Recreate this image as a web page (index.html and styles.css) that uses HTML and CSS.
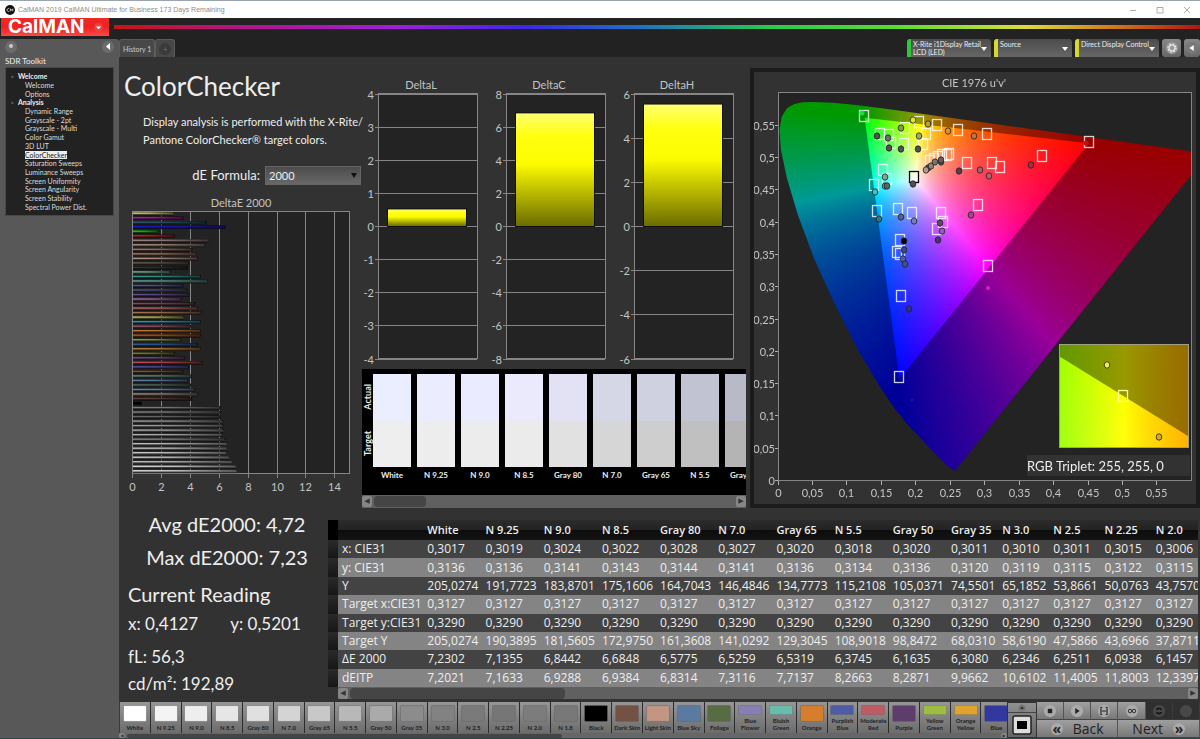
FILE: index.html
```html
<!DOCTYPE html>
<html lang="en">
  <head>
    <title>CalMAN 2019</title>
    <meta charset="UTF-8" />
    <meta name="viewport" content="width=device-width, initial-scale=1" />
    <link rel="stylesheet" href="styles.css">
  </head>
  <body>
    <header class="titlebar">
      <svg class="app-icon" viewBox="0 0 10 10"><circle cx="5" cy="5" r="5" fill="#111"/><path d="M4.4 3.8A1.5 1.5 0 1 0 4.4 6.2M5.4 6.3V3.8L6.6 5.4 7.8 3.8V6.3" fill="none" stroke="#ddd" stroke-width="0.8"/></svg>
      <span class="app-title">CalMAN 2019 CalMAN Ultimate for Business 173 Days Remaining</span>
      <button class="win" aria-label="Minimize"><svg viewBox="0 0 8 8"><path d="M1 4.5H7"/></svg></button>
      <button class="win" aria-label="Maximize"><svg viewBox="0 0 8 8"><path d="M1 1.5H7V7H1Z"/></svg></button>
      <button class="win" aria-label="Close"><svg viewBox="0 0 8 8"><path d="M1 1L7 7M7 1L1 7"/></svg></button>
    </header>

    <div class="brandbar">
      <button class="logo">CalMAN <svg viewBox="0 0 10 10"><circle cx="5" cy="5" r="5" fill="#e8443f"/><path d="M2 4H8L5 7Z" fill="#fff"/></svg></button>
      <div class="rainbow"></div>
    </div>

    <div class="shell">
      <aside class="sidebar">
        <div class="side-buttons">
          <button class="knob" aria-label="Pin"><svg viewBox="0 0 12 12"><circle cx="6" cy="5" r="2" fill="#ccc"/></svg></button>
          <button class="knob" aria-label="Collapse"><svg viewBox="0 0 12 12"><path d="M8 2V9L4 5.5Z" fill="#fff"/></svg></button>
        </div>
        <h2>SDR Toolkit</h2>
        <ul class="tree">
          <li class="group">Welcome</li>
          <li><a href="#">Welcome</a></li>
          <li><a href="#">Options</a></li>
          <li class="group">Analysis</li>
          <li><a href="#">Dynamic Range</a></li>
          <li><a href="#">Grayscale - 2pt</a></li>
          <li><a href="#">Grayscale - Multi</a></li>
          <li><a href="#">Color Gamut</a></li>
          <li><a href="#">3D LUT</a></li>
          <li><a href="#" class="active">ColorChecker</a></li>
          <li><a href="#">Saturation Sweeps</a></li>
          <li><a href="#">Luminance Sweeps</a></li>
          <li><a href="#">Screen Uniformity</a></li>
          <li><a href="#">Screen Angularity</a></li>
          <li><a href="#">Screen Stability</a></li>
          <li><a href="#">Spectral Power Dist.</a></li>
        </ul>
      </aside>

      <div class="work">
        <div class="tabs">
          <button class="tab">History 1</button>
          <button class="tab add" aria-label="Add tab"><span>+</span></button>
          <div class="devices">
            <button class="device green"><span>X-Rite i1Display Retail<br>LCD (LED)</span><i></i></button>
            <button class="device short"><span>Source</span><i></i></button>
            <button class="device"><span>Direct Display Control</span><i></i></button>
            <button class="gear" aria-label="Settings"><svg viewBox="0 0 16 16"><circle cx="8" cy="8" r="7" fill="#999"/><circle cx="8" cy="8" r="3.4" fill="none" stroke="#eee" stroke-width="1.2"/><circle cx="8" cy="8" r="4.6" fill="none" stroke="#eee" stroke-width="1.4" stroke-dasharray="1.8 1.8"/></svg></button>
            <button class="gear last" aria-label="Expand"><svg viewBox="0 0 16 16"><circle cx="8" cy="8" r="7" fill="#777"/><path d="M10 4.5V11.500L5 8Z" fill="#fff"/></svg></button>
          </div>
        </div>

        <main>
          <div class="top">
            <section class="intro">
              <h1>ColorChecker</h1>
              <p>Display analysis is performed with the X-Rite/<br>Pantone ColorChecker® target colors.</p>
              <div class="formula">
                <label for="formula">dE Formula:</label>
                <span class="select"><select id="formula"><option>2000</option></select></span>
              </div>
              <svg id="deltaE" class="chart" viewBox="0 0 243 301"></svg>
            </section>

            <section class="middle">
              <div class="deltas">
                <svg id="deltaL" class="chart" viewBox="0 0 128 294"></svg>
                <svg id="deltaC" class="chart" viewBox="0 0 128 294"></svg>
                <svg id="deltaH" class="chart" viewBox="0 0 128 294"></svg>
              </div>
              <div class="patches">
                <div class="side"><span>Actual</span><span>Target</span></div>
                <div class="patch-list" id="patches"></div>
              </div>
              <div class="scroll"><button aria-label="Left">◀</button><span class="thumb"></span><button aria-label="Right">▶</button></div>
            </section>

            <section class="cie">
              <canvas id="gamut" width="442" height="432"></canvas>
              <svg id="cie" class="chart" viewBox="0 0 442 432"></svg>
            </section>
          </div>

          <div class="bottom">
            <section class="readings">
              <p class="big">Avg dE2000: 4,72</p>
              <p class="big">Max dE2000: 7,23</p>
              <h2>Current Reading</h2>
              <p class="xy"><span>x: 0,4127</span><span>y: 0,5201</span></p>
              <p class="fl">fL: 56,3</p>
              <p>cd/m²: 192,89</p>
            </section>
            <section class="data">
              <table>
                <colgroup><col class="c-stub"><col class="c-name"><col class="c-wide" span="9"><col class="c-narrow" span="5"></colgroup>
                <thead><tr id="head"></tr></thead>
                <tbody id="rows"></tbody>
              </table>
              <div class="scroll flat"><button aria-label="Left">◀</button><span class="thumb"></span><button aria-label="Right">▶</button></div>
            </section>
          </div>
        </main>

        <footer>
          <div class="swatches">
            <div class="swatch-list" id="swatches"></div>
            <div class="scroll mini"><button aria-label="Left">◀</button><span class="thumb"></span><button aria-label="Right">▶</button></div>
          </div>
          <div class="window-pick">
            <button class="up" aria-label="Pattern menu"><svg viewBox="0 0 10 10"><circle cx="5" cy="5" r="4.500" fill="#777"/><path d="M2.500 6H7.500L5 3Z" fill="#222"/></svg></button>
            <button class="pattern" aria-label="Pattern window"><svg viewBox="0 0 20 20"><rect x="1" y="1" width="18" height="18" rx="2" fill="#ddd" stroke="#222" stroke-width="1.500"/><rect x="5" y="6" width="10" height="8" fill="#000"/></svg></button>
          </div>
          <div class="controls">
            <button aria-label="Stop"><svg viewBox="0 0 16 16"><circle cx="8" cy="8" r="7" fill="#ababab"/><path d="M5.500 5.500H10.500V10.500H5.500Z" fill="#222"/></svg></button>
            <button aria-label="Play"><svg viewBox="0 0 16 16"><circle cx="8" cy="8" r="7" fill="#ababab"/><path d="M6 4.500L11 8L6 11.500Z" fill="#222"/></svg></button>
            <button aria-label="Read series"><svg viewBox="0 0 16 16"><circle cx="8" cy="8" r="7" fill="#ababab"/><path d="M6 4H4.500V12H6M10 4H11.500V12H10M5.500 8H10.500" fill="none" stroke="#222" stroke-width="1.200"/></svg></button>
            <button aria-label="Read continuous"><svg viewBox="0 0 16 16"><circle cx="8" cy="8" r="7" fill="#ababab"/><circle cx="5.700" cy="8" r="2" fill="none" stroke="#222"/><circle cx="10.300" cy="8" r="2" fill="none" stroke="#222"/></svg></button>
            <button class="off" aria-label="Auto"><svg viewBox="0 0 16 16"><circle cx="8" cy="8" r="7" fill="#484848"/><path d="M5 6.500Q8 3.500 11 6.500M5 9.500Q8 12.500 11 9.500" fill="none" stroke="#111" stroke-width="1.800"/></svg></button>
            <button class="off" aria-label="Record"><svg viewBox="0 0 16 16"><circle cx="8" cy="8" r="7" fill="#484848"/></svg></button>
            <button class="nav"><b>«</b>Back</button>
            <button class="nav">Next<b>»</b></button>
          </div>
        </footer>
      </div>
    </div>

    <script src="script.js"></script>
  </body>
</html>
```
FILE: styles.css
```css
* {
  box-sizing: border-box;
}
body {
  margin: 0;
  min-height: 100vh;
  display: flex;
  flex-direction: column;
  background-color: #222;
  color: #eee;
  font-family: Lato, sans-serif;
  font-size: 15px;
  border-bottom: 1px solid #2b4650;
}
h1,
h2,
p,
ul {
  margin: 0;
  padding: 0;
  font-weight: normal;
}
button {
  border: 0;
  padding: 0;
  font-family: inherit;
  color: inherit;
  background: none;
  cursor: pointer;
}

/* title bar */
.titlebar {
  height: 18px;
  display: flex;
  align-items: center;
  background-color: #fff;
  border-top: 1px solid #9aa3b0;
  padding-left: 5px;
}
.app-icon {
  width: 10px;
  height: 10px;
}
.app-title {
  flex: 1;
  margin-left: 3px;
  color: #8c8c8c;
  font-family: "Liberation Sans", sans-serif;
  font-size: 7px;
}
.win {
  width: 27px;
  height: 14px;
}
.win svg {
  width: 8px;
  height: 8px;
  display: block;
  margin: auto;
  fill: none;
  stroke: #999;
  stroke-width: 0.8;
}

.brandbar {
  height: 21px;
  display: flex;
  align-items: flex-start;
  gap: 5px;
  padding-left: 1px;
}
.logo {
  width: 108px;
  height: 18px;
  display: flex;
  align-items: center;
  justify-content: space-between;
  padding: 0 6px 0 7px;
  background: linear-gradient(#ee2a28, #f02020 50%, #fa4a44);
  color: #fff;
  font-family: Inter, sans-serif;
  font-size: 19px;
  font-weight: 700;
  line-height: 18px;
}
.logo svg {
  width: 9px;
  height: 9px;
}
.rainbow {
  flex: 1;
  height: 4px;
  margin-top: 7px;
  background: linear-gradient(to right, #c81414, #b4148c 12%, #a01edc 26%, #3c28e6 38%, #1e6ec8 48%, #28c850 60%, #5adc32 72%, #dcdc3c 84%, #d2781e 92%, #b41414);
}

.shell {
  flex: 1;
  display: flex;
}

/* sidebar */
.sidebar {
  width: 119px;
  padding: 2px 5px;
  background-color: #585858;
  border-top-right-radius: 3px;
}
.side-buttons {
  display: flex;
  justify-content: space-between;
  height: 14px;
}
.knob {
  width: 12px;
  height: 12px;
  border-radius: 50%;
  background-color: #6c6c6c;
}
.knob svg {
  width: 12px;
  height: 12px;
  display: block;
}
.sidebar h2 {
  height: 12px;
  line-height: 12px;
  font-size: 8px;
}
.tree {
  height: 149px;
  padding: 4px 0;
  display: grid;
  grid-auto-rows: 1fr;
  align-items: center;
  list-style: none;
  background-color: #222;
  border: 1px solid #484848;
  font-size: 7px;
  line-height: 8px;
}
.tree li {
  padding-left: 19px;
}
.tree .group {
  padding-left: 5px;
  font-weight: bold;
}
.tree .group::before {
  content: "▪";
  color: #555;
  margin-right: 4px;
}
.tree a {
  color: #ddd;
  text-decoration: none;
}
.tree .active {
  background-color: #eee;
  color: #222;
}

/* tabs and device selectors */
.work {
  flex: 1;
  min-width: 0;
  display: flex;
  flex-direction: column;
}
.tabs {
  height: 18px;
  display: flex;
}
.tab {
  padding: 0 3px;
  background-color: #484848;
  color: #ccc;
  border: 1px solid #5c5c5c;
  border-bottom: 0;
  border-radius: 3px 3px 0 0;
  font-size: 7px;
}
.tab.add span {
  display: block;
  width: 12px;
  line-height: 12px;
  border-radius: 50%;
  background-color: #3a3a3a;
  color: #777;
}
.devices {
  margin-left: auto;
  display: flex;
  gap: 3px;
}
.device {
  width: 84px;
  display: flex;
  align-items: flex-start;
  justify-content: space-between;
  padding: 1px 4px 0 2px;
  border-left: 4px solid #d8d82c;
  border-radius: 3px 3px 0 0;
  background: linear-gradient(#4c4c4c, #666);
  text-align: left;
  white-space: nowrap;
  font-size: 7px;
  line-height: 8px;
  color: #eee;
}
.device.short {
  width: 78px;
}
.device.green {
  border-color: #2cc83c;
}
.device i {
  align-self: center;
  border: 3px solid transparent;
  border-top: 4px solid #fff;
  border-bottom: 0;
}
.gear {
  width: 19px;
  background: linear-gradient(#888, #666);
  border-radius: 3px;
}
.gear svg {
  width: 14px;
  height: 14px;
  display: block;
  margin: auto;
}
.gear.last {
  width: 16px;
}

/* main area */
main {
  flex: 1;
  background-color: #323232;
}
.top {
  display: grid;
  grid-template-columns: minmax(0, 243fr) minmax(0, 388fr) minmax(0, 450fr);
  align-items: start;
}
.chart {
  display: block;
  width: 100%;
}
.chart text {
  fill: #c4c4c4;
  font-size: 11px;
}
.intro h1 {
  padding: 9px 0 0 5px;
  font-size: 26px;
  line-height: 40px;
}
.intro p {
  padding: 7px 0 0 24px;
  line-height: 18px;
  font-size: 11px;
  white-space: nowrap;
}
.formula {
  display: flex;
  justify-content: flex-end;
  align-items: center;
  gap: 5px;
  padding: 17px 1px 10px 0;
}
.formula label {
  font-size: 13px;
  line-height: 19px;
}
.select {
  width: 96px;
  position: relative;
}
.select::after {
  content: "";
  position: absolute;
  right: 4px;
  top: 7px;
  border: 3px solid transparent;
  border-top: 5px solid #111;
  border-bottom: 0;
}
.select select {
  display: block;
  width: 100%;
  height: 19px;
  padding: 0 3px;
  appearance: none;
  border: 1px solid #666;
  border-radius: 0;
  background: linear-gradient(#4c4c4c, #686868);
  color: #eee;
  font-family: inherit;
  font-size: 11px;
}

.middle {
  padding: 18px 4px 0 0;
}
.deltas {
  display: grid;
  grid-template-columns: repeat(3, minmax(0, 1fr));
}
.patches {
  height: 126px;
  display: flex;
  background-color: #000;
  padding-top: 5px;
}
.side {
  width: 11px;
  height: 92px;
  display: flex;
  flex-direction: column;
  justify-content: space-around;
  align-items: center;
}
.side span {
  writing-mode: vertical-rl;
  transform: rotate(180deg);
  font-size: 9px;
  font-weight: bold;
  line-height: 11px;
}
.patch-list {
  flex: 1;
  display: flex;
  gap: 6px;
  overflow: hidden;
}
.patch {
  flex: 0 0 38px;
  text-align: center;
  font-size: 8px;
  font-weight: bold;
  line-height: 16px;
  white-space: nowrap;
}
.patch svg {
  display: block;
  width: 38px;
  height: 93px;
}

.scroll {
  height: 13px;
  display: flex;
  align-items: center;
  gap: 2px;
  background-color: #606060;
}
.scroll button {
  width: 10px;
  height: 11px;
  line-height: 11px;
  border-radius: 2px;
  background-color: #868686;
  color: #333;
  font-family: "DejaVu Sans", sans-serif;
  font-size: 7px;
}
.scroll .thumb {
  width: 52px;
  height: 11px;
  border-radius: 4px;
  background-color: #454545;
  margin-right: auto;
}
.scroll.flat {
  height: 12px;
  margin-left: 10px;
}
.scroll.flat .thumb {
  width: 25%;
}
.scroll.mini {
  height: 5px;
  background-color: #666;
}
.scroll.mini button {
  width: 6px;
  height: 5px;
  line-height: 5px;
  font-size: 4px;
}
.scroll.mini .thumb {
  width: 49%;
  height: 4px;
}

.cie {
  display: grid;
  margin-top: 11px;
  border: 4px solid #1b1b1b;
}
.cie > * {
  grid-area: 1 / 1;
  width: 100%;
}
.cie .triplet {
  fill: #eee;
  font-size: 13px;
}

/* readings and table */
.bottom {
  display: flex;
}
.readings {
  width: 209px;
  padding-left: 9px;
  font-size: 17px;
  line-height: 27px;
}
.readings .big {
  padding-right: 2px;
  text-align: center;
  font-size: 20px;
  line-height: 33px;
}
.readings h2 {
  font-size: 20px;
  line-height: 40px;
}
.readings .xy {
  display: flex;
  gap: 32px;
  line-height: 20px;
}
.readings .fl {
  padding-top: 9px;
}
.data {
  flex: 1;
  min-width: 0;
  margin: 12px 2px 0 0;
  overflow: hidden;
}
table {
  width: 877px;
  height: 167px;
  table-layout: fixed;
  border-collapse: collapse;
  font-family: "Open Sans", sans-serif;
  font-size: 12px;
  line-height: 16px;
}
.c-stub {
  width: 10px;
}
.c-name {
  width: 87px;
}
.c-wide {
  width: 58px;
}
.c-narrow {
  width: 51px;
}
th,
td {
  padding: 0 0 0 2px;
  text-align: left;
  font-weight: normal;
  white-space: nowrap;
}
thead th {
  height: 20px;
  background: linear-gradient(#2c2c2c, #222 50%, #0c0c0c 51%, #141414);
  font-size: 11px;
  font-weight: 600;
}
tbody tr {
  background-color: #434343;
}
tbody tr:nth-child(even) {
  background-color: #848484;
}
tbody th {
  padding-left: 4px;
}
.stub {
  background: linear-gradient(#2a2a2a, #161616);
}
thead .stub {
  background: #000;
}

/* bottom bar */
footer {
  height: 36px;
  display: flex;
  background-color: #3a3a3a;
}
.swatches {
  flex: 1;
  min-width: 0;
}
.swatch-list {
  height: 31px;
  padding-left: 1px;
  display: grid;
  grid-auto-flow: column;
  grid-auto-columns: 3.47%;
  grid-template-rows: 31px;
  overflow: hidden;
}
.swatch {
  display: flex;
  flex-direction: column;
  align-items: center;
  justify-content: space-between;
  padding: 3px 0 2px;
  overflow: hidden;
  border-right: 1px solid #2c2c2c;
  background: linear-gradient(#969696, #6c6c6c);
  color: #222;
  font-size: 6px;
  font-weight: bold;
  line-height: 7px;
}
.swatch svg {
  flex: 1;
  width: 24px;
  min-height: 0;
  margin-bottom: 2px;
}
.window-pick {
  width: 30px;
  display: flex;
  flex-direction: column;
  background: linear-gradient(#909090, #666);
  border: 1px solid #333;
}
.up {
  height: 10px;
  border-bottom: 1px solid #444;
}
.up svg {
  width: 8px;
  height: 8px;
  display: block;
  margin: auto;
}
.pattern svg {
  width: 20px;
  height: 20px;
  display: block;
  margin: 2px auto 0;
}
.controls {
  width: 163px;
  display: grid;
  grid-template-columns: repeat(6, 1fr);
  grid-template-rows: 18px 18px;
}
.controls button {
  background: linear-gradient(#a0a0a0, #787878);
  border-right: 1px solid #555;
  border-bottom: 1px solid #444;
}
.controls svg {
  width: 14px;
  height: 14px;
  display: block;
  margin: auto;
}
.controls .off {
  background: #303030;
  border-color: #3a3a3a;
}
.controls .nav {
  grid-column: span 3;
  display: flex;
  align-items: center;
  justify-content: center;
  gap: 10px;
  color: #222;
  font-family: "Open Sans", sans-serif;
  font-size: 14px;
  font-weight: 500;
  line-height: 16px;
}
.nav b {
  width: 12px;
  line-height: 12px;
  border-radius: 50%;
  background-color: #aaa;
}
```
FILE: script.js
```js
// ---- helpers ----
function line(x1, y1, x2, y2, color) {
  return `<path d="M${x1} ${y1}L${x2} ${y2}" stroke="${color || "#858585"}"/>`;
}
function label(x, y, text, anchor, cls) {
  return `<text x="${x}" y="${y}" text-anchor="${anchor || "middle"}" class="${cls || ""}">${text}</text>`;
}
function put(id, html) {
  document.getElementById(id).innerHTML = html;
}

// ---- DeltaE 2000 bars: [value, color] ----
var deltaE = [
  [2.85, "#e0d880"], [3.5, "#b018b0"], [5.1, "#2c6078"], [6.4, "#1c1cc0"], [1.8, "#20c820"], [2.9, "#c82020"],
  [5.3, "#a08888"], [5, "#b09888"], [4.1, "#a07868"], [4.4, "#b07860"], [4.5, "#b89080"], [3.9, "#686058"],
  [3.8, "#303830"], [2.6, "#80b090"], [4.7, "#309890"], [5.2, "#68a8a0"], [3.5, "#505890"], [3.8, "#585888"],
  [3.9, "#605090"], [3.35, "#a870a8"], [4.3, "#884858"], [4.5, "#c07070"], [4.75, "#a87050"], [3.55, "#c8c860"],
  [4.7, "#2898b0"], [4, "#a05878"], [4.7, "#c07830"], [4.7, "#b05828"], [3.3, "#88a848"], [4.5, "#3060a8"],
  [4.7, "#c08040"], [2.9, "#788030"], [3.6, "#785088"], [4.8, "#c84858"], [3.9, "#5058a8"], [3.5, "#885030"],
  [4.1, "#609088"], [3.85, "#6080a8"], [4, "#587060"], [4.3, "#6888b0"], [4.5, "#a09080"], [4.1, "#604038"],
  [0.6, "#000"], [6.05, "#808080"], [6.1, "#888"], [6.05, "#686868"], [6.25, "#a0a0a0"], [6.25, "#a0a0a0"],
  [6.3, "#b0b0b0"], [6.2, "#b0b0b0"], [6.4, "#909090"], [6.55, "#c0c0c0"], [6.55, "#c8c8c8"], [6.5, "#d0d0d0"],
  [6.7, "#d0d0d0"], [6.9, "#c8c8c8"], [7.17, "#e0e0e0"], [7.23, "#e8e8e8"]
];

function drawDeltaE() {
  var s = `<defs><linearGradient id="fade"><stop offset="0" stop-opacity="0"/><stop offset="0.4" stop-opacity="0.1"/><stop offset="1" stop-opacity="0.6"/></linearGradient></defs>`;
  s += label(122, 12, "DeltaE 2000");
  s += `<rect x="13.5" y="16.500" width="217" height="262" fill="#232323" stroke="#858585"/>`;
  for (var v = 0; v <= 14; v += 2) {
    var x = Math.round(13 + v * 14.45) + 0.5;
    s += line(x, 17, x, 283);
    s += label(x, 296, v);
  }
  deltaE.forEach(function (bar, i) {
    var y = 17 + i * 4.52;
    var w = bar[0] * 14.45;
    s += `<rect x="14" y="${y}" width="${w}" height="3.500" fill="#0c0c0c"/>`;
    s += `<rect x="14" y="${y}" width="${w}" height="3" fill="${bar[1]}" opacity="0.25"/>`;
    s += `<rect x="14" y="${y + 0.5}" width="${w - 1}" height="1.300" fill="${bar[1]}"/>`;
    s += `<rect x="14" y="${y}" width="${w}" height="2" fill="url(#fade)"/>`;
  });
  put("deltaE", s);
}

// ---- DeltaL / DeltaC / DeltaH ----
function drawDelta(id, title, max, step, value) {
  var zero = 151, half = 132.5;
  var s = `<defs><linearGradient id="y-${id}" x2="0" y2="1"><stop offset="0" stop-color="#ffff70"/><stop offset="0.2" stop-color="#ffff10"/><stop offset="0.45" stop-color="#fcfc00"/><stop offset="1" stop-color="#6c6c00"/></linearGradient></defs>`;
  s += label(59, 14, title);
  s += `<rect x="16.500" y="18.500" width="99" height="265" fill="#232323" stroke="#858585"/>`;
  for (var v = -max; v <= max; v += step) {
    var y = Math.round(zero - v / max * half) + 0.5;
    s += line(13, y, 115, y);
    s += label(12, y + 4, v, "end");
  }
  var h = value / max * half;
  s += `<rect x="25" y="${zero - h - 1}" width="80" height="${h + 2}" fill="#111"/>`;
  s += `<rect x="26" y="${zero - h}" width="78" height="${h}" fill="url(#y-${id})"/>`;
  put(id, s);
}

// ---- CIE 1976 u'v' diagram ----
var LEFT = 24.5, BOTTOM = 409, SX = 689, SY = 646;

function xyToPlot(x, y) {
  var d = -2 * x + 12 * y + 3;
  return [LEFT + 4 * x / d * SX, BOTTOM - 9 * y / d * SY];
}

// display color for a u'v' point, at full brightness
function colorAt(u, v) {
  v = Math.max(v, 0.002);
  var X = 9 * u / (4 * v), Y = 1, Z = (12 - 3 * u - 20 * v) / (4 * v);
  var rgb = [
    3.2406 * X - 1.5372 * Y - 0.4986 * Z,
    -0.9689 * X + 1.8758 * Y + 0.0415 * Z,
    0.0557 * X - 0.2040 * Y + 1.0570 * Z
  ];
  var top = Math.max(rgb[0], rgb[1], rgb[2]);
  return rgb.map(function (c) {
    return 255 * Math.pow(Math.max(c, 0) / top, 0.88);
  });
}

var locus = [
  [0.1741, 0.005], [0.1726, 0.0048], [0.1689, 0.0069], [0.1644, 0.0109], [0.1566, 0.0177], [0.144, 0.0297],
  [0.1355, 0.0399], [0.1241, 0.0578], [0.1096, 0.0868], [0.0913, 0.1327], [0.0687, 0.2007], [0.0454, 0.295],
  [0.0235, 0.4127], [0.0082, 0.5384], [0.0039, 0.6548], [0.0139, 0.7502], [0.0389, 0.812], [0.0743, 0.8338],
  [0.1142, 0.8262], [0.1547, 0.8059], [0.2296, 0.7543], [0.3016, 0.6923], [0.3731, 0.6245], [0.4441, 0.5547],
  [0.5125, 0.4866], [0.5752, 0.4242], [0.627, 0.3725], [0.6915, 0.3083], [0.719, 0.2809], [0.7347, 0.2653]
];
var triangle = [[0.64, 0.33], [0.3, 0.6], [0.15, 0.06]];

// fills a w x h tile with colors; toUV maps a tile pixel to u'v'
function tile(w, h, toUV, gain) {
  var c = document.createElement("canvas");
  c.width = w;
  c.height = h;
  var ctx = c.getContext("2d");
  var img = ctx.createImageData(w, h);
  for (var y = 0, i = 0; y < h; y++) {
    for (var x = 0; x < w; x++, i += 4) {
      var uv = toUV(x, y);
      var rgb = colorAt(uv[0], uv[1]);
      img.data[i] = rgb[0] * gain;
      img.data[i + 1] = rgb[1] * gain;
      img.data[i + 2] = rgb[2] * gain;
      img.data[i + 3] = 255;
    }
  }
  ctx.putImageData(img, 0, 0);
  return c;
}

function clipTo(ctx, points) {
  ctx.beginPath();
  points.forEach(function (p) { ctx.lineTo(p[0], p[1]); });
  ctx.closePath();
  ctx.clip();
}

function drawGamut() {
  var ctx = document.getElementById("gamut").getContext("2d");
  ctx.fillStyle = "#323232";
  ctx.fillRect(0, 0, 442, 432);
  ctx.fillStyle = "#232323";
  ctx.fillRect(24, 20, 414, 389);

  function full(x, y) { return [(x - LEFT) / SX, (BOTTOM - y) / SY]; }
  var tri = triangle.map(function (p) { return xyToPlot(p[0], p[1]); });
  ctx.save();
  clipTo(ctx, [[24, 20], [438, 20], [438, 409], [24, 409]]);
  clipTo(ctx, locus.map(function (p) { return xyToPlot(p[0], p[1]); }));
  ctx.drawImage(tile(442, 432, full, 0.6), 0, 0);
  clipTo(ctx, tri);
  ctx.drawImage(tile(442, 432, full, 1), 0, 0);
  ctx.restore();

  // magnified area round the yellow target
  var cx = 165, cy = 51.8, zx = 3.5, zy = 19;
  function near(x, y) { return full(cx + (x - 64) / zx, cy + (y - 51) / zy); }
  ctx.drawImage(tile(128, 102, near, 0.6), 306, 273);
  ctx.save();
  clipTo(ctx, [[306, 273], [434, 273], [434, 375], [306, 375]]);
  clipTo(ctx, tri.map(function (p) { return [370 + (p[0] - cx) * zx, 324 + (p[1] - cy) * zy]; }));
  ctx.drawImage(tile(128, 102, near, 1), 306, 273);
  ctx.restore();
}

var targets = [
  [110, 44], [126, 62], [135, 63], [137, 71], [151, 56], [150, 72], [165, 50], [183, 53], [172, 62], [169, 72],
  [204, 58], [233, 62], [176, 89], [180, 87], [184, 85], [188, 83], [193, 83], [195, 82], [213, 91], [238, 91],
  [246, 95], [288, 84], [335, 70], [129, 98], [133, 107], [120, 113], [123, 139], [144, 137], [158, 141],
  [187, 141], [189, 150], [183, 157], [224, 133], [146, 168], [143, 180], [146, 182], [234, 194], [147, 224], [145, 305]
];
var dark = "#505050";
var measured = [
  [159, 48, "#e8e820"], [147, 56, "#80a030"], [123, 64, dark], [134, 66, "#607860"], [135, 76, dark], [147, 77, dark],
  [164, 77, dark], [165, 64, "#a8a860"], [174, 52, "#c0a020"], [194, 59, "#e09030"], [220, 64, "#c87040"],
  [174, 96, dark], [172, 98, "#b09c90"], [177, 94, "#908078"], [181, 90, "#807068"], [187, 90, dark], [187, 88, "#705858"],
  [205, 99, "#584048"], [226, 98, "#a86070"], [235, 104, "#b86070"], [277, 93, "#a03040"], [131, 105, "#80a898"],
  [131, 114, "#709890"], [133, 114, "#506868"], [121, 120, "#30c8c8"], [125, 147, "#307888"], [147, 145, "#506090"],
  [160, 149, "#7080c0"], [159, 112, dark], [186, 151, "#604870"], [188, 159, "#9060b0"], [184, 168, "#503080"],
  [217, 143, "#a04890"], [150, 169, "#000"], [150, 178, "#404878"], [149, 187, "#5060a8"], [151, 192, "#405098"],
  [155, 237, "#303090"]
];

function square(x, y, color) {
  return `<rect x="${x - 4.5}" y="${y - 5.5}" width="9" height="11" fill="none" stroke="${color}" stroke-width="1.300"/>`;
}
function dot(x, y, color) {
  return `<ellipse cx="${x}" cy="${y}" rx="2.800" ry="3.200" fill="${color}" stroke="#222" stroke-opacity="0.8"/>`;
}

function drawCie() {
  var s = label(220, 15, "CIE 1976 u'v'");
  s += `<rect x="24.500" y="20.500" width="413" height="388" fill="none" stroke="#858585"/>`;
  for (var i = 0; i <= 11; i++) {
    var text = String(i * 5 / 100).replace(".", ",");
    var x = Math.round(LEFT + i * 0.05 * SX) - 0.5;
    var y = Math.round(BOTTOM - i * 0.05 * SY) - 0.5;
    s += line(x, 409, x, 413, "#b0b0b0") + label(x, 425, text);
    s += line(21, y, 24, y, "#b0b0b0") + label(21, y + 4, text, "end");
  }
  targets.forEach(function (p) { s += square(p[0], p[1], "rgba(255,255,255,0.8)"); });
  s += square(160, 105, "#000");
  measured.forEach(function (p) { s += dot(p[0], p[1], p[2]); });
  s += `<circle cx="108" cy="41" r="2.500" fill="#20d840"/><circle cx="332" cy="71" r="2.500" fill="#c80c0c"/>`;
  s += `<circle cx="234" cy="216" r="2" fill="#e020c0"/><circle cx="158" cy="328" r="1" fill="#2020c8"/>`;
  s += `<rect x="305.500" y="272.500" width="129" height="103" fill="none" stroke="#a0a080"/>`;
  s += dot(353, 293, "#f0f040") + square(369, 324, "#ffffa0") + dot(405, 365, "#d8a830");
  s += `<rect x="273" y="383" width="163" height="21" fill="#323232"/>`;
  s += label(273, 399, "RGB Triplet: 255, 255, 0", "start", "triplet");
  put("cie", s);
}

// ---- actual / target patches ----
var patches = [
  ["White", "#ebeeff", "#eee"], ["N 9.25", "#ebedff", "#ededed"], ["N 9.0", "#ebebff", "#ececec"],
  ["N 8.5", "#eaeafc", "#ebebeb"], ["Gray 80", "#e2e2f4", "#e1e1e1"], ["N 7.0", "#d6d7e6", "#d6d6d6"],
  ["Gray 65", "#d0d1e0", "#cecece"], ["N 5.5", "#c1c3d2", "#c0c0c0"], ["Gray 50", "#b8bac8", "#b4b4b4"]
];
put("patches", patches.map(function (p) {
  return `<div class="patch"><svg viewBox="0 0 38 93"><rect width="38" height="47" fill="${p[1]}"/><rect y="47" width="38" height="46" fill="${p[2]}"/></svg>${p[0]}</div>`;
}).join(""));

// ---- results table ----
var columns = ["White", "N 9.25", "N 9.0", "N 8.5", "Gray 80", "N 7.0", "Gray 65", "N 5.5", "Gray 50", "Gray 35", "N 3.0", "N 2.5", "N 2.25", "N 2.0"];
var results = {
  "x: CIE31": "0,3017 0,3019 0,3024 0,3022 0,3028 0,3027 0,3020 0,3018 0,3020 0,3011 0,3010 0,3011 0,3015 0,3006",
  "y: CIE31": "0,3136 0,3136 0,3141 0,3143 0,3144 0,3141 0,3136 0,3134 0,3136 0,3120 0,3119 0,3115 0,3122 0,3115",
  "Y": "205,0274 191,7723 183,8701 175,1606 164,7043 146,4846 134,7773 115,2108 105,0371 74,5501 65,1852 53,8661 50,0763 43,7570",
  "Target x:CIE31": Array(14).fill("0,3127").join(" "),
  "Target y:CIE31": Array(14).fill("0,3290").join(" "),
  "Target Y": "205,0274 190,3895 181,5605 172,9750 161,3608 141,0292 129,3045 108,9018 98,8472 68,0310 58,6190 47,5866 43,6966 37,8711",
  "ΔE 2000": "7,2302 7,1355 6,8442 6,6848 6,5775 6,5259 6,5319 6,3745 6,1635 6,3080 6,2346 6,2511 6,0938 6,1457",
  "dEITP": "7,2021 7,1633 6,9288 6,9384 6,8314 7,3116 7,7137 8,2663 8,2871 9,9662 10,6102 11,4005 11,8003 12,3397"
};
put("head", `<th class="stub"></th><th></th>` + columns.map(function (c) { return `<th>${c}</th>`; }).join(""));
put("rows", Object.keys(results).map(function (name) {
  var cells = results[name].split(" ").map(function (v) { return `<td>${v}</td>`; }).join("");
  return `<tr><td class="stub"></td><th>${name}</th>${cells}</tr>`;
}).join(""));

// ---- bottom swatches ----
var swatches = [
  ["White", "#fff"], ["N 9.25", "#f4f4f4"], ["N 9.0", "#eee"], ["N 8.5", "#e6e6e6"], ["Gray 80", "#e0e0e0"],
  ["N 7.0", "#d4d4d4"], ["Gray 65", "#c8c8c8"], ["N 5.5", "#b8b8b8"], ["Gray 50", "#aaa"], ["Gray 35", "#8c8c8c"],
  ["N 3.0", "#828282"], ["N 2.5", "#7a7a7a"], ["N 2.25", "#767676"], ["N 2.0", "#7c7c7c"], ["N 1.8", "#787878"],
  ["Black", "#000"], ["Dark Skin", "#735244"], ["Light Skin", "#c29682"], ["Blue Sky", "#5a7aa2"], ["Foliage", "#576c43"],
  ["Blue<br>Flower", "#8580b1"], ["Bluish<br>Green", "#67bdaa"], ["Orange", "#d67e2c"], ["Purplish<br>Blue", "#505ba6"],
  ["Moderate<br>Red", "#c15a63"], ["Purple", "#5e3c6c"], ["Yellow<br>Green", "#9dbc40"], ["Orange<br>Yellow", "#e0a32e"], ["Blue", "#3338a0"]
];
put("swatches", swatches.map(function (s) {
  return `<button class="swatch"><svg viewBox="0 0 24 15" preserveAspectRatio="none"><rect x="0.500" y="0.500" width="23" height="14" rx="1" fill="${s[1]}" stroke="#666" stroke-width="0.500"/></svg><span>${s[0]}</span></button>`;
}).join(""));

drawDeltaE();
drawDelta("deltaL", "DeltaL", 4, 1, 0.5);
drawDelta("deltaC", "DeltaC", 8, 2, 6.8);
drawDelta("deltaH", "DeltaH", 6, 2, 5.5);
drawGamut();
drawCie();
```
